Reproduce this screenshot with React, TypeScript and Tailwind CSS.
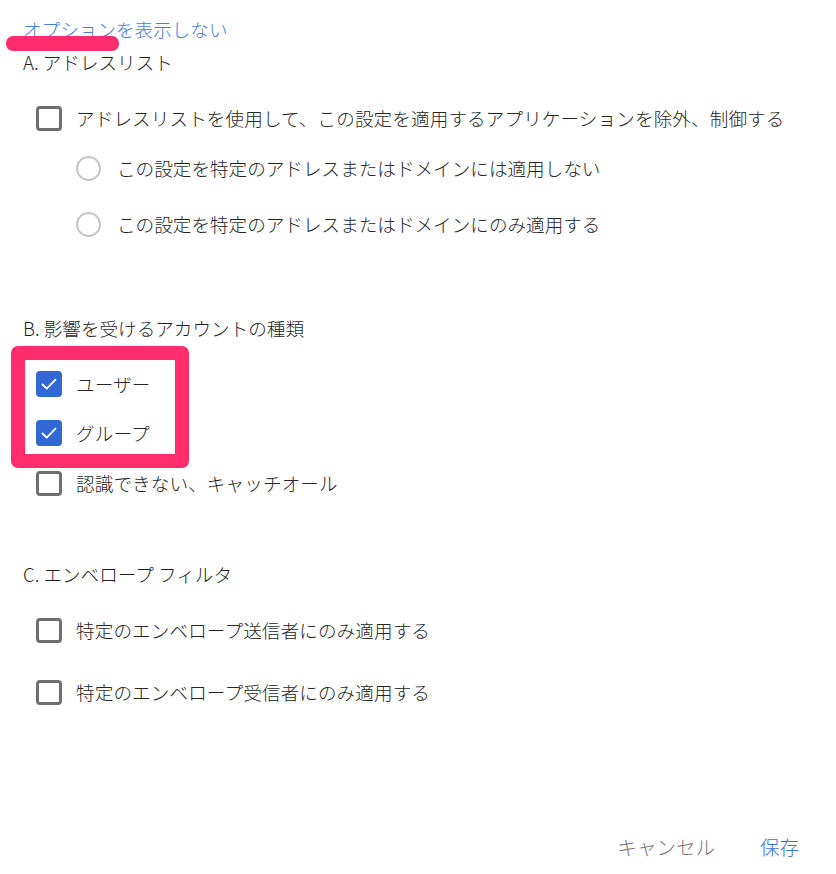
import React from "react";

const font = { fontFamily: '"Noto Sans CJK JP", "Noto Sans", sans-serif' };

function Box({ checked }: { checked?: boolean }) {
  if (checked) {
    return (
      <span className="flex w-[26px] h-[26px] shrink-0 items-center justify-center rounded-[4px] bg-[#3367d6]">
        <svg width="20" height="20" viewBox="0 0 20 20" fill="none">
          <path d="M3.5 10.5l4.2 4.2 8.8-9" stroke="#fff" strokeWidth="1.8" strokeLinecap="round" strokeLinejoin="round" />
        </svg>
      </span>
    );
  }
  return <span className="block w-[26px] h-[25px] shrink-0 rounded-[4px] border-[3px] border-[#6f6f6f]" />;
}

function CheckRow({ label, checked, mt }: { label: string; checked?: boolean; mt: string }) {
  return (
    <div className={`flex h-[40px] items-center pl-[13px] ${mt}`}>
      <Box checked={checked} />
      <span className="ml-[14px] text-[18.6px] font-light leading-[28px] tracking-[0.1px] text-[#262626]">{label}</span>
    </div>
  );
}

function RadioRow({ label, mt }: { label: string; mt: string }) {
  return (
    <div className={`flex h-[40px] items-center pl-[53px] ${mt}`}>
      <span className="block w-[25px] h-[25px] shrink-0 rounded-full border-2 border-[#c6c6c6]" />
      <span className="ml-[16px] text-[18.6px] font-light leading-[28px] text-[#262626]">{label}</span>
    </div>
  );
}

function Heading({ children, mt }: { children: React.ReactNode; mt: string }) {
  return <div className={`h-[28px] text-[18.6px] font-light leading-[28px] text-[#1f1f1f] ${mt}`}>{children}</div>;
}

export default function App() {
  return (
    <div className="relative w-[836px] h-[874px] overflow-hidden bg-white" style={font}>
      <div className="pl-[23px] pt-[15px]">
        <div className="h-[28px] text-[18.6px] font-light leading-[28px] text-[#4a7be2]">オプションを表示しない</div>
        <Heading mt="mt-[5px]">A. アドレスリスト</Heading>
        <CheckRow mt="mt-[22px]" label="アドレスリストを使用して、この設定を適用するアプリケーションを除外、制御する" />
        <RadioRow mt="mt-[10px]" label="この設定を特定のアドレスまたはドメインには適用しない" />
        <RadioRow mt="mt-[16px]" label="この設定を特定のアドレスまたはドメインにのみ適用する" />

        <Heading mt="mt-[70px]">B. 影響を受けるアカウントの種類</Heading>
        <CheckRow mt="mt-[22px]" checked label="ユーザー" />
        <CheckRow mt="mt-[9px]" checked label="グループ" />
        <CheckRow mt="mt-[10px]" label="認識できない、キャッチオール" />

        <Heading mt="mt-[57px]">C. エンベロープ フィルタ</Heading>
        <CheckRow mt="mt-[22px]" label="特定のエンベロープ送信者にのみ適用する" />
        <CheckRow mt="mt-[22px]" label="特定のエンベロープ受信者にのみ適用する" />
      </div>

      <div className="mt-[115px] flex h-[40px] items-center justify-end gap-[45px] pr-[37px] text-[19.5px] font-light leading-[28px]">
        <span className="text-[#777777]">キャンセル</span>
        <span className="text-[#3b73de]">保存</span>
      </div>

      {/* annotations */}
      <div className="absolute left-[6px] top-[36px] h-[15px] w-[113px] rounded-[7px] bg-[#ff2d6d]" />
      <div className="absolute left-[11px] top-[346px] h-[122px] w-[178px] rounded-[7px] border-[14px] border-[#ff2d6d]" />
    </div>
  );
}
